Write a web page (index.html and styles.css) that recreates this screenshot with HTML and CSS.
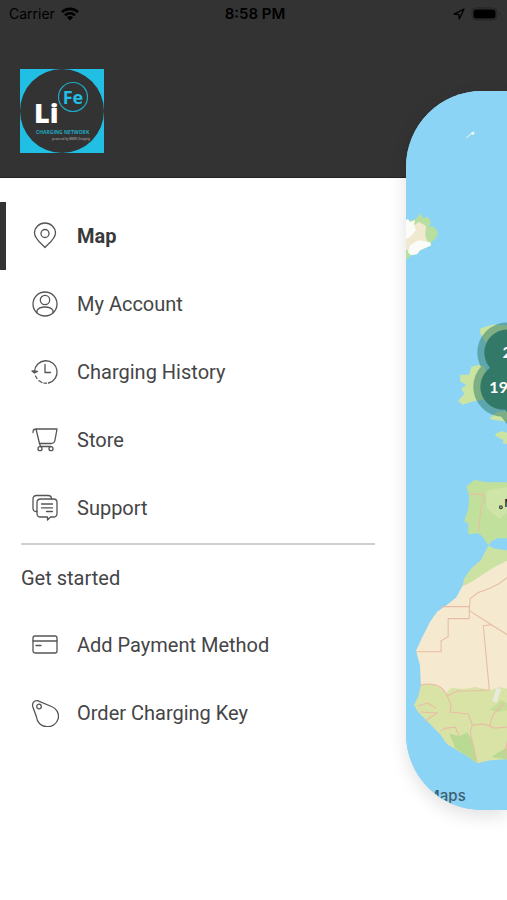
FILE: index.html
```html
<!DOCTYPE html>
<html lang="en">
<head>
<meta charset="utf-8">
<meta name="viewport" content="width=device-width, initial-scale=1">
<title>LiFe Charging Network</title>
<link rel="stylesheet" href="styles.css">
</head>
<body>
<div class="app">
  <header class="header">
    <div class="status">
      <span class="carrier">Carrier
        <svg width="18" height="14" viewBox="0 0 18 14" aria-hidden="true"><g fill="none" stroke="#000" stroke-width="2.6"><path d="M1 5.2A11.3 11.3 0 0 1 17 5.2"/><path d="M4 8.3A7 7 0 0 1 14 8.3"/></g><path d="M5.9 10.4Q9 7.800 12.100 10.400L9 13.600Z"/></svg>
      </span>
      <span class="time">8:58 PM</span>
      <span class="indicators">
        <svg width="12" height="12" viewBox="0 0 12 12" aria-hidden="true"><path d="M1 6.200L11 1L6.300 11L5.800 6.500Z" fill="none" stroke="#000" stroke-width="1.300" stroke-linejoin="round"/></svg>
        <svg width="30" height="14" viewBox="0 0 30 14" aria-hidden="true"><rect x="1" y="1" width="25" height="12" rx="4" fill="none" stroke="#242424"/><rect x="2.500" y="2.500" width="22" height="9" rx="2.500"/><path d="M28 5Q29.500 7 28 9Z" fill="#1c1c1c"/></svg>
      </span>
    </div>
    <svg class="logo" viewBox="0 0 84 84" role="img" aria-label="LiFe Charging Network">
      <path fill="#20bfe3" d="M0 0H84V84H0Z"/>
      <circle cx="42" cy="42" r="42" fill="#333"/>
      <circle cx="53" cy="28" r="14.500" fill="none" stroke="#20a9c4" stroke-width="1.200"/>
      <text class="logo-fe" x="53" y="34.500">Fe</text>
      <text class="logo-li" x="14" y="54">Li</text>
      <text class="logo-name" x="16" y="65">CHARGING NETWORK</text>
      <text class="logo-by" x="32" y="71">powered by BMW Charging</text>
    </svg>
  </header>

  <nav class="menu" aria-label="Main">
    <a class="item active" href="#map">
      <svg class="icon" viewBox="0 0 28 28"><path d="M14 25.500C11 22 3.500 17 3.500 11A10.500 10 0 0 1 24.500 11C24.500 17 17 22 14 25.500Z"/><circle cx="14" cy="11.500" r="4"/></svg>
      Map
    </a>
    <a class="item" href="#account">
      <svg class="icon" viewBox="0 0 28 28"><circle cx="14" cy="14" r="12"/><circle cx="14" cy="10" r="4.700"/><path d="M6 22.800V20.500Q8 17 14 17T22 20.500V22.800"/></svg>
      My Account
    </a>
    <a class="item" href="#history">
      <svg class="icon" viewBox="0 0 28 28"><path d="M3.500 13.500A11.300 11.300 0 1 1 17.500 25"/><path d="M1 13L3.500 15L6.500 13.500Z" fill="#555557"/><path d="M4.500 18L6 20.500M8 22.700L11 24.500M13 25.200H15.500"/><path d="M14 6.500V14.500H19.500"/></svg>
      Charging History
    </a>
    <a class="item" href="#store">
      <svg class="icon" viewBox="0 0 28 28"><path d="M2 6.500Q2 3 5 3H26L24 14Q23.500 17.500 20 17.500H8.500L5 3"/><path d="M8.500 17.500L9.500 20.500H20"/><circle cx="9" cy="22.700" r="2"/><circle cx="20" cy="22.700" r="2"/></svg>
      Store
    </a>
    <a class="item" href="#support">
      <svg class="icon" viewBox="0 0 28 28"><path d="M6 17.500H5Q2 17.500 2 14V5Q2 1.500 5.500 1.500H17Q20.500 1.500 20.500 5"/><path d="M10 5H22.500Q26 5 26 8.500V19.500Q26 23 22.500 23H19.500L16.500 26V23H9.500Q6 23 6 19.500V8.500Q6 5 10 5Z"/><path d="M10.500 10H21.500M10.500 13.800H21.500M15.500 17.500H21.500"/></svg>
      Support
    </a>
    <hr class="rule">
    <h2 class="heading">Get started</h2>
    <a class="item" href="#payment">
      <svg class="icon" viewBox="0 0 28 28"><rect x="2" y="5" width="24" height="17" rx="2"/><path d="M2 10H26M5 14.500H10"/></svg>
      Add Payment Method
    </a>
    <a class="item" href="#key">
      <svg class="icon" viewBox="0 0 28 28"><path d="M6.500 1.700C3 1.300 1 4 1.700 7.500L5.500 18A11 10.500 0 1 0 20.500 7.500Z"/><circle cx="8" cy="7.500" r="2.300"/></svg>
      Order Charging Key
    </a>
  </nav>

  <main class="map-card" id="map">
    <svg class="map" viewBox="406 91 101 719" preserveAspectRatio="xMinYMid slice" role="img" aria-label="Charging station map">
      <path fill="#8bd4f5" d="M406 91H2000V810H406Z"/>
      <path d="M466 139L474 133" stroke="#d8f0ea" stroke-width="1"/><circle cx="472.500" cy="134.500" r="1.500" fill="#f4faf0"/>
      <path fill="#b9dfa0" d="M406 222L413 221L417 219L420 214L423 219L428 218L431 223L429 227L434 228L438 233L436 239L431 243L431 246L420 251L417 255L411 256L406 261Z"/>
      <path fill="#f0e9d0" d="M406 228L414 226L419 223L426 227L425 235L427 242L431 246L420 251L411 253L406 250Z"/>
      <path fill="#fbfbf8" d="M406 221L408 220L410 223L415 221L414 226L416 231L411 237L406 240ZM410 246L418 241L430 243L431 246L420 251L417 255L411 256L408 253Z"/>
      <g fill="#cbe4a2">
        <path d="M480 329L486 327L493 325L507 326V350L488 348L480 334Z"/>
        <path d="M471 367L479 365L484 367L490 380L486 399L472 402L462 405L458 401L464 394L461 389L466 385L460 382V375L469 375Z"/>
        <path d="M489 419L497 412L507 411V422L494 420Z"/>
        <path d="M495 434L501 431L507 433V444L502 443L503 440L495 436Z"/>
      </g>
      <path fill="#c1e09b" d="M469 484L474 480L487 482L507 482V538L497 538L491 541L488 545L482 536L478 533L468 534V523L464 521L468 509L469 496L466 486Z"/>
      <path fill="#cfe4a7" d="M486 490L507 487V512L499 519L492 513L486 507Z"/>
      <path fill="#cbe2a3" d="M488 545L494 548L507 550V590H461L464 578L471 568L481 559Z"/>
      <path fill="#f5ead0" d="M507 560L495 566L484 573L472 581L462 586L456 597L446 605L437 611L430 621L421 639L416 650L420 665L421 690L431 699L507 700Z"/>
      <path fill="#d9e3a6" d="M421 684L430 683L438 686L446 692L451 687L464 688L475 686L490 689L500 686L507 688V758L490 759L477 762L467 755L447 743L440 733L428 721L418 711L414 704L418 696Z"/>
      <path fill="#b9da92" d="M449 732L459 735L467 731L472 739L477 762L467 755L455 747ZM491 756L498 751L507 746V758Z"/>
      <path fill="#e9eadc" d="M492 700L496 687L501 688L496 702Z"/>
      <path fill="#c7dd9a" d="M489 709L501 699L507 703V709L498 711Z"/>
      <g fill="none" stroke="#e8bda4" stroke-width="1.100">
        <path d="M469 494H483L484 500L481 506L478 531M507 577L499 583L489 588L478 592L470 598L469 610M441 606H469V618H448V636L441 640V651H416M469 610L491 624L507 634M491 624L483 625L489 689M420 684Q441 680 447 695L457 690L468 690L489 689M447 695L451 704L450 711L468 713L472 724L470 731L477 762M418 705L427 702L436 707M420 711L437 712L425 720M440 730L446 727L455 726L459 735M472 724L484 723L494 727L507 726M489 725L493 713L498 708L504 702M507 739L504 757"/>
      </g>
      <circle cx="500.500" cy="507" r="1.500" fill="#8aa080" stroke="#35433a"/>
      <text class="city" x="504" y="507">Madrid</text>
      <g class="halo"><circle cx="507" cy="353" r="30"/><circle cx="527" cy="402" r="30"/><circle cx="503" cy="387" r="30"/></g>
      <g class="cluster"><circle cx="507" cy="353" r="23"/><circle cx="527" cy="402" r="23"/><circle cx="503" cy="387" r="23"/></g>
      <text class="count" x="502" y="358">2</text>
      <text class="count" x="489" y="393">194</text>
      <text class="credit" x="426" y="800">Maps</text>
    </svg>
  </main>
</div>
</body>
</html>
```
FILE: styles.css
```css
* {
  box-sizing: border-box;
}

body {
  margin: 0;
  background: #fff;
  color: #454547;
  font-family: Roboto, sans-serif;
  font-size: 20px;
}

.app {
  position: relative;
  min-height: 100vh;
  overflow: hidden;
}

.header {
  padding-bottom: 24px;
  background: #333;
  border-bottom: 1px solid #222;
}

.status {
  display: grid;
  grid-template-columns: 1fr auto 1fr;
  align-items: center;
  height: 27px;
  padding: 0 6px 0 9px;
  color: #000;
  font-family: Inter, sans-serif;
  font-size: 14px;
}

.carrier,
.indicators {
  display: flex;
  align-items: center;
  gap: 6px;
}

.indicators {
  justify-content: flex-end;
}

.time {
  font-size: 15px;
  font-weight: 600;
}

.logo {
  display: block;
  width: 84px;
  height: 84px;
  margin: 42px 0 0 20px;
}

.logo text {
  font-family: "Open Sans", sans-serif;
}

.logo .logo-fe {
  fill: #20bfe3;
  font-size: 18px;
  font-weight: 700;
  text-anchor: middle;
}

.logo .logo-li {
  fill: #fff;
  font-size: 27px;
  font-weight: 800;
}

.logo .logo-name {
  fill: #20a9c4;
  font-size: 5px;
  font-weight: 700;
}

.logo .logo-by {
  fill: #bbb;
  font-size: 3px;
}

.menu {
  width: 80%;
  padding-top: 24px;
}

.item {
  display: flex;
  align-items: center;
  gap: 18px;
  height: 68px;
  padding-left: 25px;
  border-left: 6px solid transparent;
  color: inherit;
  text-decoration: none;
}

.item.active {
  border-left-color: #333;
  color: #39393b;
  font-weight: 700;
}

.icon {
  flex: none;
  width: 28px;
  height: 28px;
  fill: none;
  stroke: #555557;
  stroke-width: 1.3;
  stroke-linecap: round;
  stroke-linejoin: round;
}

.rule {
  height: 2px;
  margin: 1px 31px 0 21px;
  border: 0;
  background: #d0d0d0;
}

.heading {
  margin: 0;
  padding-left: 21px;
  font-size: 20px;
  font-weight: 400;
  line-height: 66px;
}

.map-card {
  position: absolute;
  top: 91px;
  right: 0;
  bottom: 90px;
  left: 80%;
  overflow: hidden;
  border-radius: 76px 0 0 76px;
  background: #8bd4f5;
  box-shadow: 0 6px 18px rgba(0, 0, 0, 0.12);
}

.map {
  display: block;
  width: 100%;
  height: 100%;
}

.halo {
  fill: #327968;
  opacity: 0.5;
}

.cluster {
  fill: #327968;
}

.count {
  fill: #fff;
  font-family: Lato, sans-serif;
  font-size: 16px;
  font-weight: 700;
}

.city {
  fill: #222;
  font-family: Inter, sans-serif;
  font-size: 10px;
  font-weight: 600;
}

.credit {
  fill: #3f5f70;
  font-family: Inter, sans-serif;
  font-size: 15px;
  font-weight: 500;
}
```
